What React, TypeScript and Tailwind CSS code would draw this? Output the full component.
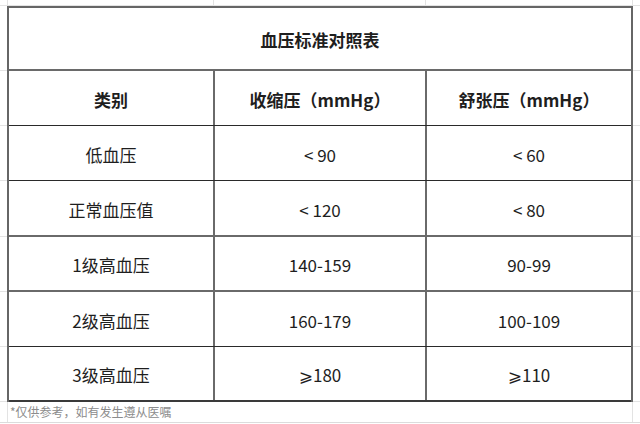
import React from 'react';

type Row = {
  label: string;
  sys: string;
  dia: string;
  h: string;
  line: string;
};

const rows: Row[] = [
  { label: '低血压', sys: '< 90', dia: '< 60', h: 'h-[55px]', line: 'border-b border-[#2a2a2a]' },
  { label: '正常血压值', sys: '< 120', dia: '< 80', h: 'h-[56px]', line: 'border-b-2 border-[#6a6a6a]' },
  { label: '1级高血压', sys: '140-159', dia: '90-99', h: 'h-[55px]', line: 'border-b-2 border-[#6a6a6a]' },
  { label: '2级高血压', sys: '160-179', dia: '100-109', h: 'h-[55px]', line: 'border-b border-[#2a2a2a]' },
  { label: '3级高血压', sys: '⩾180', dia: '⩾110', h: 'h-[55px]', line: 'border-b-2 border-[#3a3a3a]' },
];

// heights of the spreadsheet rows beside the table, top to bottom
const gutterRows = ['h-[65px]', 'h-[55px]', 'h-[55px]', 'h-[56px]', 'h-[55px]', 'h-[55px]', 'h-[55px]'];

function Gutter() {
  return (
    <div className="flex flex-col">
      {gutterRows.map((h, i) => (
        <div key={i} className={`${h} border-b border-[#e3e3e3]`} />
      ))}
    </div>
  );
}

function Cell({ children, last, bold }: { children: React.ReactNode; last?: boolean; bold?: boolean }) {
  return (
    <div
      className={`flex items-center justify-center pt-[3px] ${
        last ? '' : 'border-r-2 border-[#6a6a6a]'
      } ${bold ? 'font-bold' : ''}`}
    >
      {children}
    </div>
  );
}

export default function App() {
  return (
    <div
      className="w-[640px] h-[424px] bg-white flex flex-col overflow-hidden text-[#1e1e1e]"
      style={{ fontFamily: '"Noto Sans CJK SC", "Noto Sans", "DejaVu Sans", sans-serif' }}
    >
      {/* sheet grid above the table */}
      <div className="h-[6px] flex border-b border-[#e3e3e3]">
        <div className="w-[8px] border-r border-[#e3e3e3]" />
        <div className="w-[206px] border-r border-[#e3e3e3]" />
        <div className="w-[212px] border-r border-[#e3e3e3]" />
        <div className="w-[207px] border-r border-[#e3e3e3]" />
        <div className="flex-1" />
      </div>

      <div className="flex">
        <div className="w-[7px]">
          <Gutter />
        </div>

        {/* Table */}
        <div className="w-[626px] border-t-2 border-x-2 border-[#666]">
          <div className="h-[63px] flex items-center justify-center pt-[3px] border-b-2 border-[#6a6a6a] text-[17px] font-bold">
            血压标准对照表
          </div>

          <div className="h-[55px] grid grid-cols-[206px_212px_1fr] border-b border-[#2a2a2a] text-[17px]">
            <Cell bold>类别</Cell>
            <Cell bold>收缩压（mmHg）</Cell>
            <Cell bold last>舒张压（mmHg）</Cell>
          </div>

          {rows.map((r) => (
            <div key={r.label} className={`${r.h} grid grid-cols-[206px_212px_1fr] ${r.line} text-[17px]`}>
              <Cell>{r.label}</Cell>
              <Cell>{r.sys}</Cell>
              <Cell last>{r.dia}</Cell>
            </div>
          ))}
        </div>

        <div className="flex-1">
          <Gutter />
        </div>
      </div>

      {/* Footnote row */}
      <div className="h-[21px] flex border-b border-[#dcdcdc]">
        <div className="w-[8px] border-r border-[#e3e3e3]" />
        <div className="w-[625px] border-r border-[#e3e3e3] flex items-center pl-[2px] text-[12px] text-[#8c8c8c]">
          *仅供参考，如有发生遵从医嘱
        </div>
        <div className="flex-1" />
      </div>
    </div>
  );
}
